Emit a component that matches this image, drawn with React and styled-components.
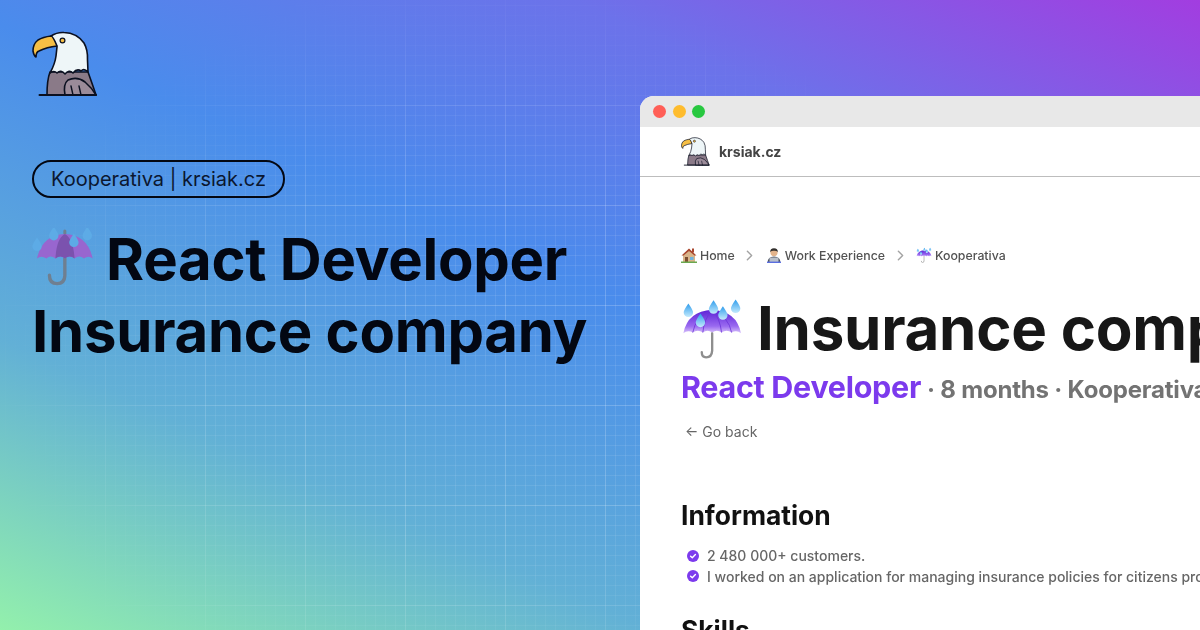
import React from 'react'
import styled, { createGlobalStyle } from 'styled-components'
import { ChevronRight } from 'lucide-react'

const Global = createGlobalStyle`
  html, body {
    margin: 0;
    padding: 0;
    background: #4a8ef0;
  }
  * { box-sizing: border-box; }
  svg { display: block; flex: none; }
`

const Page = styled.div`
  position: relative;
  display: flex;
  width: 1200px;
  height: 630px;
  overflow: hidden;
  font-family: Inter, "Liberation Sans", sans-serif;
  background: linear-gradient(24deg, #93f0ac 0%, #62b0d6 25%, #4a8cec 52%, #6c72ea 76%, #a23de0 100%);

  &::before {
    content: '';
    position: absolute;
    inset: 0;
    background-image:
      linear-gradient(rgba(255,255,255,.12) 1px, transparent 1px),
      linear-gradient(90deg, rgba(255,255,255,.12) 1px, transparent 1px),
      linear-gradient(rgba(255,255,255,.09) 1px, transparent 1px),
      linear-gradient(90deg, rgba(255,255,255,.09) 1px, transparent 1px);
    background-size: 100px 100px, 100px 100px, 10px 10px, 10px 10px;
    background-position: 5px 5px;
    -webkit-mask-image: radial-gradient(ellipse 500px 400px at 480px 370px, #000 45%, transparent 100%);
    mask-image: radial-gradient(ellipse 500px 400px at 480px 370px, #000 45%, transparent 100%);
  }
`

const Left = styled.section`
  position: relative;
  display: flex;
  flex-direction: column;
  align-items: flex-start;
  flex: 0 0 640px;
  padding: 31px 0 0 32px;
  color: #030712;
`

const Pill = styled.div`
  display: flex;
  align-items: center;
  height: 38px;
  margin-top: 63px;
  padding: 0 17px;
  border: 2px solid #030712;
  border-radius: 19px;
  font-size: 20px;
  color: #0b1730;
  white-space: nowrap;
`

const BigTitle = styled.h1`
  margin: 25px 0 0;
  font-size: 58px;
  line-height: 72px;
  font-weight: 700;
  letter-spacing: -0.25px;
  white-space: nowrap;
`

const TitleLine = styled.div`
  display: flex;
  align-items: center;
  gap: 12px;
`

const Browser = styled.section`
  position: relative;
  flex: 1;
  margin-top: 96px;
  background: #fff;
  border-top-left-radius: 14px;
  overflow: hidden;
  filter: blur(0.3px);
`

const TitleBar = styled.div`
  display: flex;
  align-items: center;
  gap: 6.5px;
  height: 31px;
  padding-left: 13px;
  background: #e8e8e8;
`

const Dot = styled.span`
  width: 13px;
  height: 13px;
  border-radius: 50%;
  background: ${p => p.$color};
`

const Nav = styled.div`
  display: flex;
  align-items: center;
  gap: 9px;
  height: 50px;
  padding-left: 41px;
  border-bottom: 1px solid #bdbdbd;
`

const Brand = styled.span`
  font-size: 14px;
  font-weight: 700;
  color: #444;
`

const Content = styled.div`
  padding: 68px 0 0 41px;
  white-space: nowrap;
`

const Crumbs = styled.div`
  display: flex;
  align-items: center;
  height: 20px;
  font-size: 12.3px;
  font-weight: 500;
  color: #525252;
`

const Crumb = styled.span`
  display: inline-flex;
  align-items: center;
  gap: 3px;
`

const Sep = styled(ChevronRight)`
  width: 17px;
  height: 17px;
  margin: 0 7.5px 0 6.5px;
  color: #a3a3a3;
`

const PageTitle = styled.h2`
  display: flex;
  align-items: center;
  gap: 14px;
  margin: 30px 0 0;
  height: 66px;
  font-size: 60px;
  font-weight: 700;
  letter-spacing: -0.25px;
  color: #171717;
`

const Sub = styled.div`
  display: flex;
  align-items: baseline;
  gap: 6px;
  margin-top: 7px;
  font-size: 24px;
  font-weight: 700;
  letter-spacing: -0.2px;
  color: #737373;
`

const Role = styled.span`
  font-size: 30.5px;
  font-weight: 700;
  letter-spacing: -0.3px;
  color: #7c3aed;
`

const Back = styled.div`
  margin: 18px 0 0 4px;
  font-size: 14px;
  color: #666;
`

const Heading = styled.h3`
  margin: ${p => p.$top}px 0 0;
  font-size: 26.4px;
  line-height: 32px;
  font-weight: 700;
  color: #111;
`

const List = styled.ul`
  display: grid;
  gap: 1.5px;
  margin: 15px 0 0;
  padding: 0 0 0 6px;
  list-style: none;
`

const Item = styled.li`
  display: flex;
  align-items: center;
  gap: 8px;
  height: 19px;
  font-size: 14px;
  font-weight: 500;
  color: #666;
`

const Eagle = ({ size }) => (
  <svg width={size} height={size} viewBox="31 31 66 66">
    <path d="M49 72 Q46 80 46 95 L95 95 Q92 86 87 72 Z" fill="#8a7a88" stroke="#0b1020" strokeWidth="1.6" strokeLinejoin="round" />
    <path d="M64 95 Q62 84 67 80 Q76 76 84 82 Q91 88 95 95 Z" fill="#9b8b99" stroke="#0b1020" strokeWidth="1.6" strokeLinejoin="round" />
    <path d="M72 95 L70 86 M80 95 L78 86" stroke="#0b1020" strokeWidth="1.4" strokeLinecap="round" />
    <path d="M38.5 95 L95 95" stroke="#0b1020" strokeWidth="2" strokeLinecap="round" />
    <path d="M50 36 Q56 32 63 32.5 Q76 33 83 43 Q87 50 86.5 60 L87 72 Q83 68 80 71 Q76 68 72 73 Q68 69 64 74 Q60 69 56 73 Q53 70 49 73 Q54 64 55 56 L56 47 Z" fill="#eef6f8" stroke="#0b1020" strokeWidth="1.6" strokeLinejoin="round" />
    <path d="M56 46 Q52 36 50 36 Q42 37 37 40 Q32 44 32 51 Q33 56 35 57 Q35 52 38 51 Q46 47 56 46 Z" fill="#f6bf45" stroke="#0b1020" strokeWidth="1.6" strokeLinejoin="round" />
    <circle cx="61.5" cy="40.5" r="2.4" fill="#f6bf45" stroke="#0b1020" strokeWidth="1.2" />
  </svg>
)

const dropPath = (x, y, r) =>
  `M${x} ${y - r * 1.9} Q${x + r * 1.05} ${y - r * 0.4} ${x + r} ${y} A${r} ${r} 0 0 1 ${x - r} ${y} Q${x - r * 1.05} ${y - r * 0.4} ${x} ${y - r * 1.9} Z`

const DROPS_FLAT = [[50, 82], [100, 50], [160, 70], [200, 50]]
const DROPS = [[57, 76], [132, 66], [198, 64], [160, 84], [93, 106]]

// on the gradient the emoji is a flat, see-through version
const FlatUmbrella = () => (
  <svg width="62" height="62" viewBox="35 27 185 185">
    <path d="M133 118 L133 170 Q132 193 110 193 Q87 193 87 168" fill="none" stroke="#6f7f90" strokeWidth="10" strokeLinecap="round" />
    <path d="M133 36 L133 50" stroke="#6f7f90" strokeWidth="9" strokeLinecap="round" />
    <path d="M133 45 Q65 48 50 118 Q62 108 78 118 Q90 106 105 118 Q120 106 133 118 Q148 106 162 118 Q176 106 190 118 Q204 108 216 118 Q201 48 133 45 Z" fill="#9866cf" />
    <path d="M133 45 Q108 58 105 118 Q120 106 133 118 Q148 106 162 118 Q158 58 133 45 Z" fill="#7b52ae" />
    {DROPS_FLAT.map(([x, y]) => (
      <path key={x} d={dropPath(x, y, 14)} fill="#5dabe6" />
    ))}
  </svg>
)

const Umbrella = ({ size, id }) => (
  <svg width={size} height={size} viewBox="35 30 185 185">
    <defs>
      <linearGradient id={`${id}c`} x1="0" y1="0" x2="0" y2="1">
        <stop offset="0" stopColor="#5b21d6" />
        <stop offset=".7" stopColor="#9a6af0" />
        <stop offset="1" stopColor="#d9c4fb" />
      </linearGradient>
      <linearGradient id={`${id}d`} x1="0" y1="0" x2="0" y2="1">
        <stop offset="0" stopColor="#2f9cec" />
        <stop offset="1" stopColor="#c4ebfd" />
      </linearGradient>
    </defs>
    <path d="M128 138 L128 190 Q127 210 110 210 Q97 210 97 195" fill="none" stroke="#8e8e8e" strokeWidth="7" strokeLinecap="round" />
    <path d="M128 68 Q55 72 42 138 Q55 128 70 136 Q85 125 100 136 Q114 126 128 136 Q142 126 156 136 Q171 125 186 136 Q201 128 214 138 Q201 72 128 68 Z" fill={`url(#${id}c)`} />
    <path d="M128 68 Q78 90 70 136 M128 68 Q104 95 100 136 M128 68 Q152 95 156 136 M128 68 Q178 90 186 136" fill="none" stroke="#6d35d8" strokeWidth="2.5" />
    {DROPS.map(([x, y]) => (
      <path key={x} d={dropPath(x, y, 14)} fill={`url(#${id}d)`} />
    ))}
  </svg>
)

const House = () => (
  <svg width="16" height="16" viewBox="0 0 16 16">
    <path d="M2 8 L8 2 L14 8 L14 15 L2 15 Z" fill="#d9b48a" />
    <path d="M0.5 8.5 L8 1.5 L15.5 8.5 L13.5 8.5 L8 4 L2.5 8.5 Z" fill="#a9472f" />
    <rect x="11" y="1.5" width="2" height="4" fill="#a9472f" />
    <rect x="4" y="10" width="3" height="5" fill="#7d4e30" />
    <rect x="9" y="10" width="3.5" height="3" fill="#6fb4de" />
    <rect x="0" y="14.5" width="16" height="1.5" fill="#6aa84f" />
  </svg>
)

const Coder = () => (
  <svg width="16" height="16" viewBox="0 0 16 16">
    <path d="M1.5 16 Q1.5 9.5 8 9.5 Q14.5 9.5 14.5 16 Z" fill="#4f5663" />
    <circle cx="8" cy="5.5" r="3.6" fill="#e3b48c" />
    <path d="M4.2 5 Q4 1.2 8 1.2 Q12 1.2 11.8 5 Q10 3.4 8 3.8 Q6 3.4 4.2 5 Z" fill="#33302e" />
    <rect x="3.5" y="10.5" width="9" height="4.5" rx="0.5" fill="#b9c0ca" />
    <rect x="1" y="14.6" width="14" height="1.4" fill="#5a6ee0" />
  </svg>
)

const Check = () => (
  <svg width="12" height="12" viewBox="0 0 12 12">
    <circle cx="6" cy="6" r="6" fill="#7c3aed" />
    <path d="M3.6 6.2 L5.3 7.8 L8.4 4.6" fill="none" stroke="#fff" strokeWidth="1.4" strokeLinecap="round" strokeLinejoin="round" />
  </svg>
)

const App = () => {
  return (
    <Page>
      <Global />
      <Left>
        <Eagle size={66} />
        <Pill>Kooperativa | krsiak.cz</Pill>
        <BigTitle>
          <TitleLine>
            <FlatUmbrella />
            React Developer
          </TitleLine>
          <TitleLine>Insurance company</TitleLine>
        </BigTitle>
      </Left>
      <Browser>
        <TitleBar>
          <Dot $color="#ff5f57" />
          <Dot $color="#febc2e" />
          <Dot $color="#28c840" />
        </TitleBar>
        <Nav>
          <Eagle size={29} />
          <Brand>krsiak.cz</Brand>
        </Nav>
        <Content>
          <Crumbs>
            <Crumb><House />Home</Crumb>
            <Sep />
            <Crumb><Coder />Work Experience</Crumb>
            <Sep />
            <Crumb><Umbrella size={16} id="b" />Kooperativa</Crumb>
          </Crumbs>
          <PageTitle>
            <Umbrella size={62} id="c" />
            Insurance company
          </PageTitle>
          <Sub>
            <Role>React Developer</Role>
            <span>· 8 months · Kooperativa</span>
          </Sub>
          <Back>← Go back</Back>
          <Heading $top={59}>Information</Heading>
          <List>
            <Item><Check />2 480 000+ customers.</Item>
            <Item><Check />I worked on an application for managing insurance policies for citizens products</Item>
          </List>
          <Heading $top={28}>Skills</Heading>
        </Content>
      </Browser>
    </Page>
  )
}

export default App
